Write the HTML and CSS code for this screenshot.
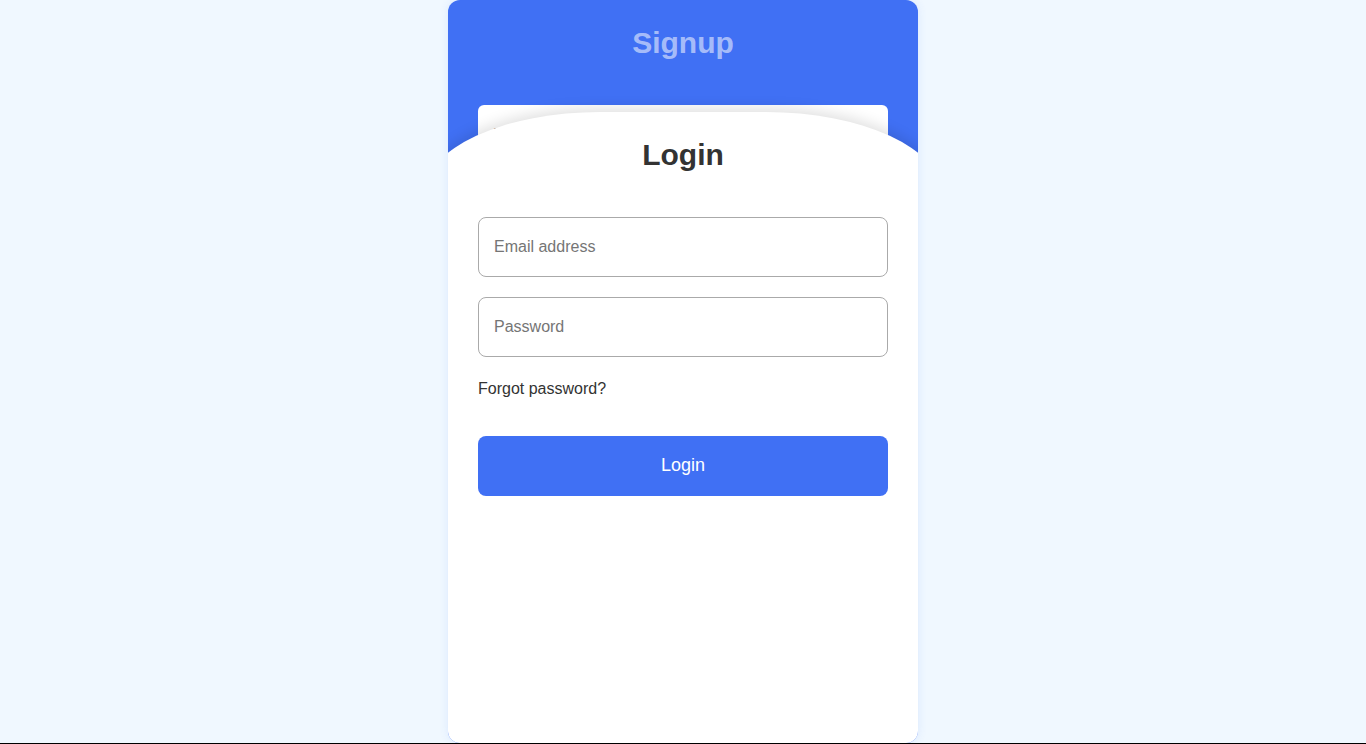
FILE: index.html
```html
<!DOCTYPE html>
<html lang="en">
<head>
  <meta charset="UTF-8" />
  <title>Login / Signup</title>
  <link rel="stylesheet" href="styles.css">
</head>
<body>
  <div class="page">
    <div class="container">
      <!-- Signup (behind) -->
      <div class="form signup">
        <h2 class="title signupTitle">Signup</h2>
        <div class="fields">
          <input type="text" class="field plain" placeholder="Full name" />
          <input type="email" class="field plain" placeholder="Email address" />
          <input type="password" class="field plain" placeholder="Password" />
          <button class="btn light">Signup</button>
        </div>
      </div>

      <!-- Login (slides over) -->
      <div class="form login">
        <h2 class="title">Login</h2>
        <div class="fields">
          <input type="email" class="field" placeholder="Email address" />
          <input type="password" class="field" placeholder="Password" />
          <a href="#" class="forgot">Forgot password?</a>
          <button class="btn">Login</button>
        </div>
      </div>
    </div>
  </div>
</body>
</html>
```

FILE: styles.css
```css
* {
  box-sizing: border-box;
}
body {
  font-family: "Liberation Sans", Arial, sans-serif;
  margin: 0;
  background-color: #f0f8ff;
}
.page {
  height: 744px;
  border-bottom: 1px solid #000;
  overflow: hidden;
}
.container {
  position: relative;
  width: 470px;
  height: 743px;
  margin: 0 auto;
  background: #4070f4;
  border-radius: 12px;
  overflow: hidden;
  box-shadow: 0 0 10px rgba(64, 112, 244, 0.12);
}
.form {
  padding: 26px 30px 25px;
}
.title {
  margin: 0;
  font-size: 30px;
  line-height: 34px;
  font-weight: 700;
  text-align: center;
  color: #333;
}
.signupTitle {
  color: rgba(255, 255, 255, 0.55);
}
.fields {
  display: flex;
  flex-direction: column;
  gap: 20px;
  margin-top: 45px;
}
.field {
  height: 60px;
  width: 100%;
  padding: 0 15px;
  border: 1px solid #aaa;
  border-radius: 8px;
  font-family: inherit;
  font-size: 16px;
  color: #333;
  background: #fff;
  outline: none;
}
.field::placeholder {
  color: #757575;
}
.field.plain {
  border: none;
  border-radius: 6px;
}
.login {
  position: absolute;
  top: 112px;
  left: -23px;
  right: -23px;
  bottom: 0;
  padding: 26px 53px 25px;
  background: #fff;
  border-radius: 175px 175px 0 0 / 81px 81px 0 0;
  box-shadow: 0 -4px 14px rgba(0, 0, 0, 0.12);
}
.forgot {
  display: block;
  margin-top: 3px;
  line-height: 18px;
  font-size: 16px;
  color: #333;
  text-decoration: none;
}
.btn {
  margin-top: 18px;
  height: 60px;
  width: 100%;
  padding: 0 0 2px;
  border: none;
  border-radius: 8px;
  background: #4070f4;
  color: #fff;
  font-family: inherit;
  font-size: 18px;
  cursor: pointer;
}
.btn.light {
  background: rgba(255, 255, 255, 0.3);
}
```
